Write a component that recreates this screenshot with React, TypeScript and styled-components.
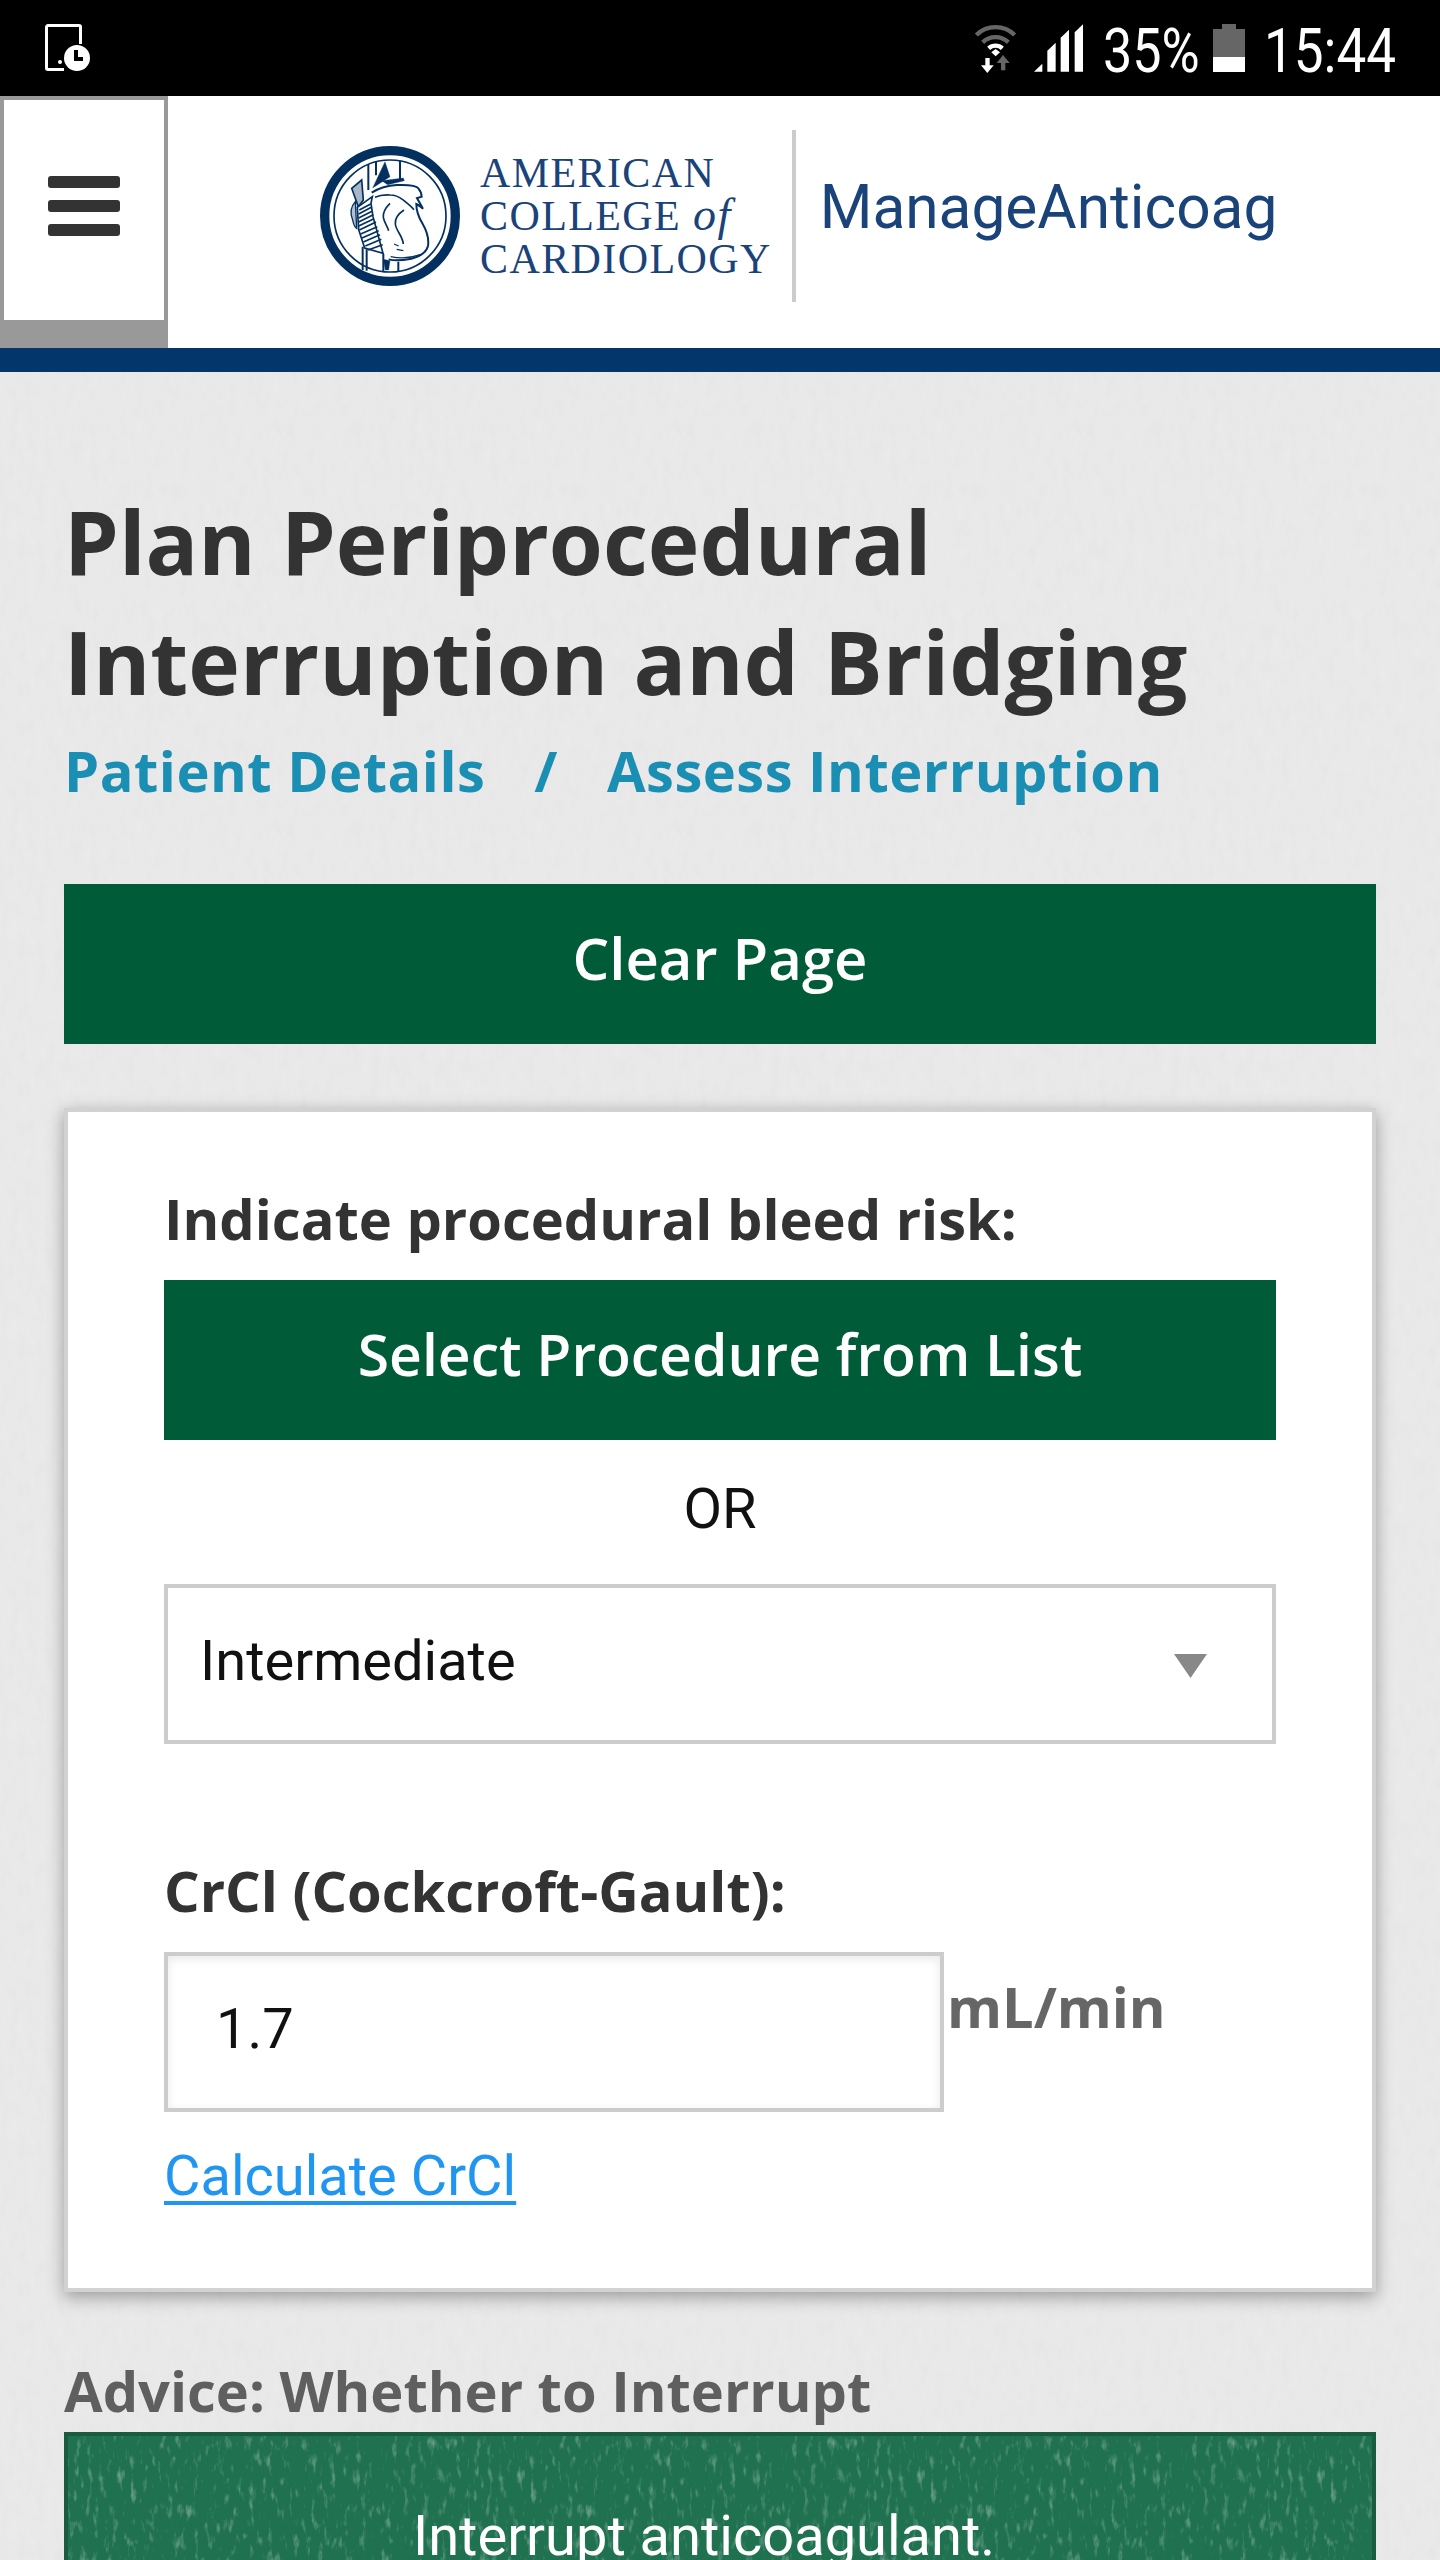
import styled, { createGlobalStyle } from 'styled-components';

const paperNoise = `url("data:image/svg+xml,%3Csvg xmlns='http://www.w3.org/2000/svg' width='400' height='400'%3E%3Cfilter id='n'%3E%3CfeTurbulence type='fractalNoise' baseFrequency='0.11 0.05' numOctaves='3' stitchTiles='stitch'/%3E%3CfeColorMatrix values='0 0 0 0 0.5 0 0 0 0 0.5 0 0 0 0 0.5 0 0 0 0.12 -0.03'/%3E%3C/filter%3E%3Crect width='400' height='400' filter='url(%23n)'/%3E%3C/svg%3E")`;

const speckleNoise = `url("data:image/svg+xml,%3Csvg xmlns='http://www.w3.org/2000/svg' width='400' height='400'%3E%3Cfilter id='s'%3E%3CfeTurbulence type='fractalNoise' baseFrequency='0.16 0.06' numOctaves='3' stitchTiles='stitch'/%3E%3CfeColorMatrix values='0 0 0 0 1 0 0 0 0 1 0 0 0 0 1 0 0 0 1 -0.57'/%3E%3C/filter%3E%3Crect width='400' height='400' filter='url(%23s)'/%3E%3C/svg%3E")`;

const GlobalStyle = createGlobalStyle`
  html, body {
    margin: 0;
    padding: 0;
    background: #eaeaea;
  }
  * {
    box-sizing: border-box;
  }
`;

const Page = styled.div`
  width: 1440px;
  height: 2560px;
  overflow: hidden;
  font-family: 'Open Sans', sans-serif;
  background-color: #eaeaea;
  background-image: ${paperNoise};
`;

const StatusBar = styled.div`
  display: flex;
  align-items: center;
  height: 96px;
  padding: 0 46px 0 45px;
  background: #000;
  color: #fff;
`;

const StatusRight = styled.div`
  display: flex;
  align-items: center;
  margin-left: auto;
`;

const StatusText = styled.span<{ $width: number; $squeeze: number; $ml?: number }>`
  display: inline-block;
  width: ${(p) => p.$width}px;
  height: 62px;
  margin: 6px 0 0 ${(p) => p.$ml ?? 0}px;
  font-family: Roboto, sans-serif;
  font-weight: 400;
  font-size: 62px;
  line-height: 62px;
  white-space: nowrap;
  transform: scaleX(${(p) => p.$squeeze});
  transform-origin: left center;
`;

const Battery = styled.div`
  position: relative;
  width: 32px;
  height: 43px;
  margin: 5px 19px 0 14px;
  background: linear-gradient(#666 0 65%, #fff 65% 100%);

  &::before {
    content: '';
    position: absolute;
    top: -5px;
    left: 9px;
    width: 14px;
    height: 5px;
    background: #666;
  }
`;

const Header = styled.header`
  display: flex;
  height: 276px;
  background: #fff;
  border-bottom: 24px solid #03366a;
`;

const MenuButton = styled.button`
  display: flex;
  flex-direction: column;
  align-items: center;
  gap: 12px;
  width: 168px;
  height: 252px;
  padding: 76px 0 0;
  background: #fff;
  border: 4px solid #999;
  border-bottom-width: 28px;
`;

const MenuBar = styled.span`
  width: 72px;
  height: 12px;
  border-radius: 3px;
  background: #333;
`;

const Brand = styled.div`
  display: flex;
  align-items: center;
  margin-left: 152px;
  padding-bottom: 13px;
`;

const Wordmark = styled.div`
  margin: 2px 0 0 20px;
  font-family: 'Liberation Serif', serif;
  font-size: 42px;
  line-height: 43px;
  letter-spacing: 1.4px;
  color: #1a4379;
  white-space: nowrap;

  em {
    font-size: 46px;
    line-height: 1px;
  }
`;

const BrandDivider = styled.div`
  width: 4px;
  height: 172px;
  margin: 0 24px 0 20px;
  background: #ccc;
`;

const AppName = styled.div`
  margin-top: -16px;
  font-family: Roboto, sans-serif;
  font-size: 60.4px;
  line-height: 72px;
  color: #1a4379;
`;

const Main = styled.main`
  padding: 110px 64px 0;
`;

const Title = styled.h1`
  margin: 0 0 8px;
  font-size: 87.4px;
  word-spacing: 2.5px;
  line-height: 120px;
  font-weight: 700;
  color: #333;
`;

const Crumbs = styled.nav`
  display: flex;
  margin: 0 0 74px;
  font-size: 56px;
  letter-spacing: 0.5px;
  line-height: 80px;
  font-weight: 700;
  color: #1a8fb3;
`;

const Crumb = styled.a`
  color: inherit;
`;

const CrumbSep = styled.span`
  margin: 0 49px 0 49px;
`;

const GreenButton = styled.button<{ $size: number; $mb?: number }>`
  display: block;
  width: 100%;
  height: 160px;
  margin: 0 0 ${(p) => p.$mb ?? 0}px;
  padding: 0 0 13px;
  border: none;
  border-radius: 0;
  background: #005c38;
  color: #fff;
  font-family: 'Open Sans', sans-serif;
  font-size: ${(p) => p.$size}px;
  font-weight: 600;
`;

const Card = styled.section`
  padding: 66px 96px 72px;
  background: #fff;
  border: 4px solid #d2d2d2;
  box-shadow: 0 5px 16px rgba(0, 0, 0, 0.34);
`;

const FieldLabel = styled.div<{ $mt?: number }>`
  margin-top: ${(p) => p.$mt ?? 0}px;
  margin-bottom: 22px;
  font-size: 56px;
  line-height: 80px;
  font-weight: 700;
  color: #333;
`;

const OrText = styled.div`
  margin: 29px 0 35px;
  text-align: center;
  font-family: Roboto, sans-serif;
  font-size: 56px;
  line-height: 80px;
  color: #111;
`;

const SelectBox = styled.div`
  display: flex;
  align-items: center;
  justify-content: space-between;
  height: 160px;
  padding: 0 65px 6px 32px;
  background: #fff;
  border: 4px solid #ccc;
  font-family: Roboto, sans-serif;
  font-size: 56px;
  line-height: 80px;
  color: #111;
`;

const SelectArrow = styled.span`
  width: 33px;
  height: 24px;
  margin-top: 10px;
  background: #888;
  clip-path: polygon(0 0, 100% 0, 50% 100%);
`;

const InputRow = styled.div`
  display: flex;
  align-items: flex-start;
`;

const NumberInput = styled.input`
  width: 780px;
  height: 160px;
  padding: 0 48px 6px;
  background: #fff;
  border: 4px solid #ccc;
  border-radius: 0;
  outline: none;
  box-shadow: inset 0 3px 10px rgba(0, 0, 0, 0.09);
  font-family: Roboto, sans-serif;
  font-size: 56px;
  color: #111;
`;

const Unit = styled.span`
  margin: 14px 0 0 3px;
  font-size: 56px;
  line-height: 80px;
  font-weight: 700;
  color: #666;
`;

const CalcLink = styled.a`
  display: block;
  margin-top: 24px;
  font-family: Roboto, sans-serif;
  font-size: 56px;
  line-height: 80px;
  color: #2196f0;
  text-decoration: underline;
  text-decoration-thickness: 4px;
  text-underline-offset: 6px;
`;

const AdviceTitle = styled.h2`
  margin: 58px 0 2px;
  font-size: 56px;
  line-height: 80px;
  font-weight: 700;
  color: #5f5f5f;
`;

const AdviceBox = styled.div`
  padding: 60px 32px 60px 0;
  background-color: #1f7150;
  background-image: ${speckleNoise};
  border: 4px solid #1a5c40;
  font-family: Roboto, sans-serif;
  font-size: 56px;
  line-height: 80px;
  text-align: center;
  color: #fff;
`;

function PhoneClockIcon() {
  return (
    <svg width="46" height="48" viewBox="0 0 46 48" fill="none">
      <path d="M19 45.5H3a1.500 1.500 0 0 1-1.500-1.500V3A1.500 1.500 0 0 1 3 1.500h31A1.500 1.500 0 0 1 35.500 3v17" stroke="#fff" strokeWidth="3" />
      <circle cx="15" cy="38" r="2" fill="#fff" />
      <circle cx="32" cy="34" r="13" fill="#fff" />
      <path d="M31 26v9h7" stroke="#000" strokeWidth="4" />
    </svg>
  );
}

function WifiIcon() {
  return (
    <svg width="45" height="50" viewBox="45 40 135 150" fill="none">
      <path d="M55 76a82 82 0 0 1 115 0" stroke="#666" strokeWidth="13" />
      <path d="M74 98a55 55 0 0 1 77 0" stroke="#666" strokeWidth="13" />
      <path d="M92 116a30 30 0 0 1 41 0" stroke="#fff" strokeWidth="13" />
      <path d="M100 128l13-10 13 10-13 12z" fill="#fff" />
      <path d="M82 145h13v22h12l-19 23-19-23h13z" fill="#fff" />
      <path d="M135 136l20 24h-13v22h-13v-22h-13z" fill="#666" />
    </svg>
  );
}

function SignalIcon() {
  return (
    <svg width="49" height="48" viewBox="225 45 147 143" style={{ marginLeft: 16 }}>
      <path d="M225 188l25-24v24zM265 188v-63l25-24v87zM305 188v-102l25-24v126zM347 188V69l25-24v143z" fill="#fff" />
    </svg>
  );
}

// rough hand drawing of the engraved heart in the society's seal
function SealIcon() {
  return (
    <svg width="140" height="142" viewBox="60 78 420 420" fill="none" stroke="#03305f">
      <circle cx="270" cy="288" r="196" strokeWidth="28" />
      <circle cx="270" cy="288" r="168" strokeWidth="5" />
      <path d="M205 132v78M228 126v40M300 122v58" strokeWidth="6" />
      <path d="M255 125l15 45-52 34z" fill="#03305f" />
      <path d="M245 182l65-8 3 8-50 12z" fill="#03305f" />
      <path d="M155 205l30-25 5 60-15 20z" fill="#03305f" fillOpacity="0.35" strokeWidth="5" />
      <path d="M215 218c25-16 50-22 75-23 30-1 60 2 65 10 5 6 10 16 10 25l-14 4 18 32c-8-6-14-12-20-14 0 20 6 38 18 58 14 24 20 48 17 68-4 16-20 30-50 38-30 6-55 6-68 2" strokeWidth="6" />
      <path d="M225 232c15-7 30-8 45-7 14 0 28 6 38 14 10 8 24 18 34 30M270 250c-14 14-22 26-20 42 2 14 12 26 16 40M312 270c-18 12-28 26-26 42 2 20 22 36 24 60" strokeWidth="5" />
      <path d="M158 300c-8-20-6-40 8-55l4 80c-6-4-10-14-12-25z" fill="#03305f" fillOpacity="0.3" strokeWidth="4" />
      <path d="M172 262l45-32-4 20 6 40 30 110-55-16-18-55z" fill="#fff" strokeWidth="5" />
      <path d="M178 270l34-18M176 282l38-20M176 294l40-20M176 306l44-22M176 318l46-22M178 330l50-24M182 342l50-22M186 354l50-22M190 366l50-22M196 378l48-20M204 390l44-16" strokeWidth="5" />
      <path d="M188 380v70M200 388v64M250 402v52M295 425v28" strokeWidth="6" />
      <path d="M250 418l20 4-4 28h-10z" fill="#03305f" />
      <path d="M282 372l14 6M290 388l20 4M272 410c30 6 62 4 88-6" strokeWidth="4" />
    </svg>
  );
}

export default function App() {
  return (
    <Page>
      <GlobalStyle />
      <StatusBar>
        <PhoneClockIcon />
        <StatusRight>
          <WifiIcon />
          <SignalIcon />
          <StatusText $width={96} $squeeze={0.84} $ml={20}>35%</StatusText>
          <Battery />
          <StatusText $width={130} $squeeze={0.855}>15:44</StatusText>
        </StatusRight>
      </StatusBar>

      <Header>
        <MenuButton aria-label="Menu">
          <MenuBar />
          <MenuBar />
          <MenuBar />
        </MenuButton>
        <Brand>
          <SealIcon />
          <Wordmark>
            AMERICAN
            <br />
            COLLEGE <em>of</em>
            <br />
            CARDIOLOGY
          </Wordmark>
          <BrandDivider />
          <AppName>ManageAnticoag</AppName>
        </Brand>
      </Header>

      <Main>
        <Title>
          Plan Periprocedural
          <br />
          Interruption and Bridging
        </Title>
        <Crumbs>
          <Crumb>Patient Details</Crumb>
          <CrumbSep>/</CrumbSep>
          <Crumb>Assess Interruption</Crumb>
        </Crumbs>

        <GreenButton $size={58} $mb={64}>Clear Page</GreenButton>

        <Card>
          <FieldLabel>Indicate procedural bleed risk:</FieldLabel>
          <GreenButton $size={57}>Select Procedure from List</GreenButton>
          <OrText>OR</OrText>
          <SelectBox>
            <span>Intermediate</span>
            <SelectArrow />
          </SelectBox>

          <FieldLabel $mt={106}>CrCl (Cockcroft-Gault):</FieldLabel>
          <InputRow>
            <NumberInput defaultValue="1.7" />
            <Unit>mL/min</Unit>
          </InputRow>
          <CalcLink href="#">Calculate CrCl</CalcLink>
        </Card>

        <AdviceTitle>Advice: Whether to Interrupt</AdviceTitle>
        <AdviceBox>Interrupt anticoagulant.</AdviceBox>
      </Main>
    </Page>
  );
}
